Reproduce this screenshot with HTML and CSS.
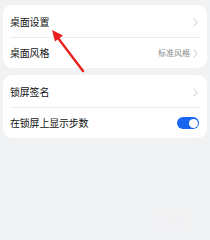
FILE: index.html
```html
<!DOCTYPE html>
<html>
<head>
<meta charset="utf-8">
<link rel="stylesheet" href="styles.css">
</head>
<body>
<div class="page">
  <div class="card">
    <div class="row">
      <span class="label">桌面设置</span>
      <span class="right"><svg class="chev" viewBox="0 0 5 9" width="5" height="9"><path d="M0.6 0.6 L4.2 4.5 L0.6 8.4" fill="none" stroke="#c2c2c2" stroke-width="0.9"/></svg></span>
    </div>
    <div class="divider"></div>
    <div class="row">
      <span class="label">桌面风格</span>
      <span class="right"><span class="value">标准风格</span><svg class="chev" viewBox="0 0 5 9" width="5" height="9"><path d="M0.6 0.6 L4.2 4.5 L0.6 8.4" fill="none" stroke="#c2c2c2" stroke-width="0.9"/></svg></span>
    </div>
  </div>
  <div class="card">
    <div class="row">
      <span class="label">锁屏签名</span>
      <span class="right"><svg class="chev" viewBox="0 0 5 9" width="5" height="9"><path d="M0.6 0.6 L4.2 4.5 L0.6 8.4" fill="none" stroke="#c2c2c2" stroke-width="0.9"/></svg></span>
    </div>
    <div class="divider"></div>
    <div class="row">
      <span class="label">在锁屏上显示步数</span>
      <span class="toggle"><span class="knob"></span></span>
    </div>
  </div>
  <svg class="arrow" width="210" height="240" viewBox="0 0 210 240">
    <line x1="83" y1="71" x2="58" y2="38" stroke="#e8201e" stroke-width="2.4" stroke-linecap="round"/>
    <polygon points="52,30 63,35.5 55,41.5" fill="#e8201e"/>
  </svg>
  <div class="watermark">
    <div class="wm1">Bai<span class="paw">&#10049;</span>经验</div>
    <div class="wm2">jingyan.baidu.com</div>
  </div>
</div>
</body>
</html>
```

FILE: styles.css
```css
html, body {
  margin: 0;
  padding: 0;
}
body {
  background: #f1f2f4;
  font-family: "Noto Sans CJK SC", "Noto Sans", sans-serif;
  width: 210px;
  height: 240px;
  overflow: hidden;
}
.page {
  position: relative;
  width: 210px;
  height: 240px;
  padding: 5px 3px 0 3px;
  box-sizing: border-box;
  display: flex;
  flex-direction: column;
  gap: 7px;
}
.card {
  background: #ffffff;
  border-radius: 9px;
  padding: 2px 9px 0 7px;
  display: flex;
  flex-direction: column;
}
.row {
  height: 30px;
  display: flex;
  align-items: center;
  justify-content: space-between;
}
.label {
  font-size: 10px;
  color: #141414;
  line-height: 12px;
  letter-spacing: -0.2px;
}
.right {
  display: flex;
  align-items: center;
  gap: 3px;
}
.value {
  font-size: 8px;
  color: #8a8a8a;
  line-height: 10px;
}
.chev {
  display: block;
}
.divider {
  height: 1px;
  background: #ececec;
  margin-right: -2px;
}
.toggle {
  width: 22px;
  height: 12px;
  border-radius: 6px;
  background: #1766f0;
  position: relative;
  margin-right: -1px;
}
.knob {
  position: absolute;
  right: 1.5px;
  top: 1.5px;
  width: 9px;
  height: 9px;
  border-radius: 50%;
  background: #ffffff;
}
.arrow {
  position: absolute;
  left: 0;
  top: 0;
}
.watermark {
  position: absolute;
  left: 152px;
  top: 211px;
  color: #ffffff;
  text-shadow: 0 0 1px #d4d5d8;
  opacity: 0.9;
}
.wm1 {
  font-family: "Liberation Sans", sans-serif;
  font-size: 9px;
  line-height: 11px;
  white-space: nowrap;
}
.paw {
  font-size: 8px;
}
.wm2 {
  font-family: "Liberation Sans", sans-serif;
  font-size: 4.5px;
  line-height: 6px;
  white-space: nowrap;
}
```
